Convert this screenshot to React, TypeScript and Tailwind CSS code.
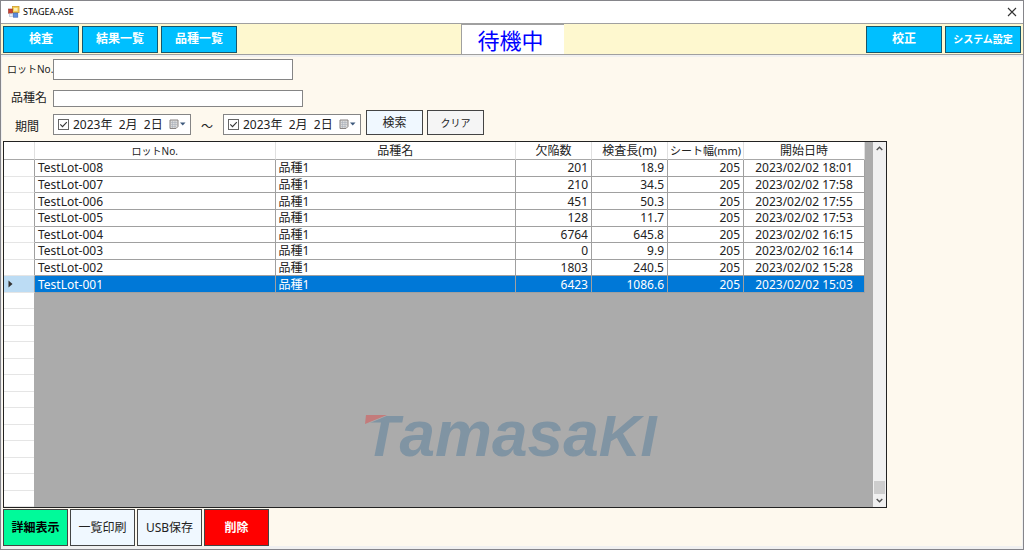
import React, { useState } from "react";

type Lot = {
  lot: string;
  kind: string;
  defects: string;
  length: string;
  width: string;
  start: string;
};

const lots: Lot[] = [
  { lot: "TestLot-008", kind: "品種1", defects: "201", length: "18.9", width: "205", start: "2023/02/02 18:01" },
  { lot: "TestLot-007", kind: "品種1", defects: "210", length: "34.5", width: "205", start: "2023/02/02 17:58" },
  { lot: "TestLot-006", kind: "品種1", defects: "451", length: "50.3", width: "205", start: "2023/02/02 17:55" },
  { lot: "TestLot-005", kind: "品種1", defects: "128", length: "11.7", width: "205", start: "2023/02/02 17:53" },
  { lot: "TestLot-004", kind: "品種1", defects: "6764", length: "645.8", width: "205", start: "2023/02/02 16:15" },
  { lot: "TestLot-003", kind: "品種1", defects: "0", length: "9.9", width: "205", start: "2023/02/02 16:14" },
  { lot: "TestLot-002", kind: "品種1", defects: "1803", length: "240.5", width: "205", start: "2023/02/02 15:28" },
  { lot: "TestLot-001", kind: "品種1", defects: "6423", length: "1086.6", width: "205", start: "2023/02/02 15:03" },
];

function AppIcon() {
  return (
    <svg width="12" height="12" viewBox="0 0 12 12" aria-hidden="true">
      <rect x="4.4" y="0.4" width="6.6" height="6.2" fill="#f5cf57" stroke="#cf9d2e" strokeWidth="0.8" />
      <rect x="6" y="2" width="3.4" height="2.8" fill="#fdf0b8" />
      <rect x="0.5" y="3" width="4" height="4.2" fill="#c8402f" stroke="#96352b" strokeWidth="0.6" />
      <rect x="1.6" y="7.8" width="3.4" height="2.8" fill="#e9eef8" stroke="#9aa9c8" strokeWidth="0.5" />
      <rect x="5.4" y="7" width="4.4" height="4.2" fill="#5b8de0" stroke="#3a62ab" strokeWidth="0.6" />
    </svg>
  );
}

function NavButton({ children }: { children: React.ReactNode }) {
  return (
    <button
      type="button"
      className="h-[27px] w-[76px] whitespace-nowrap border border-[#17566b] bg-[#00bfff] text-center text-xs font-bold leading-4 text-white"
    >
      {children}
    </button>
  );
}

function DatePicker({ id, label, value }: { id: string; label: string; value: string }) {
  const [text, setText] = useState(value);
  const [on, setOn] = useState(true);
  return (
    <div className="flex h-[21px] w-[138px] items-center border border-[#858585] bg-white pl-1 pr-1">
      <span className="relative flex size-[11px]">
        <input
          type="checkbox"
          aria-label={label + "を使う"}
          checked={on}
          onChange={(e) => setOn(e.target.checked)}
          className="size-[11px] appearance-none border border-[#666] bg-white"
        />
        {on && (
          <svg className="pointer-events-none absolute inset-0" width="11" height="11" viewBox="0 0 11 11" aria-hidden="true">
            <path d="M2.3 5.4 4.5 7.6 8.8 3.2" fill="none" stroke="#333" strokeWidth="1.1" />
          </svg>
        )}
      </span>
      <input
        id={id}
        aria-label={label}
        type="text"
        value={text}
        onChange={(e) => setText(e.target.value)}
        className="ml-1 h-4 w-0 min-w-0 flex-1 bg-transparent text-xs leading-4 text-[#222] outline-none"
      />
      <button type="button" aria-label={label + "のカレンダー"} className="flex items-center">
        <svg width="17" height="11" viewBox="0 0 17 11" aria-hidden="true">
          <path d="M1 1H9V7.5L7 9.5H1Z" fill="#dcdcdc" stroke="#8a8583" strokeWidth="1" />
          <path d="M2 3.5H8M2 5.5H8M2 7.5H7M3.5 2V9M6 2V9" stroke="#aab0bb" strokeWidth="0.6" />
          <path d="M11 3.5H16.5L13.75 6.5Z" fill="#3f5a7d" />
        </svg>
      </button>
    </div>
  );
}

function Watermark() {
  return (
    <svg
      className="pointer-events-none absolute bottom-[26px] left-[350px]"
      width="330"
      height="100"
      viewBox="0 0 330 100"
      role="img"
      aria-label="Tamasaki"
    >
      <text x="10" y="75" fill="#8094a3" className="font-['Liberation_Sans',sans-serif] font-bold italic">
        <tspan fontSize="58">T</tspan>
        <tspan fontSize="64">amasa</tspan>
        <tspan fontSize="58">KI</tspan>
      </text>
      <path d="M11 33.5H36L11 44Z" fill="#ababab" />
      <path d="M12 34H33L11 43Z" fill="#c37b7b" />
    </svg>
  );
}

const head = "h-[18px] border-b border-r border-r-[#e0e0e0] border-b-[#a8a8a8] bg-white p-0 pt-px font-normal whitespace-nowrap";

export default function App() {
  const [selected, setSelected] = useState(7);
  const [lot, setLot] = useState("");
  const [kind, setKind] = useState("");

  return (
    <div className="flex min-h-screen flex-col border border-[#85858a] bg-[#fef9ee] font-['Noto_Sans','Noto_Sans_CJK_JP',sans-serif] text-xs leading-4 text-[#222]">
      <header className="flex h-[22px] items-center justify-between bg-white pl-[7px] pr-1.5">
        <div className="flex items-center gap-[3px]">
          <AppIcon />
          <h1 className="text-[9px] leading-4 text-black">STAGEA-ASE</h1>
        </div>
        <button type="button" aria-label="閉じる">
          <svg width="10" height="10" viewBox="0 0 10 10" aria-hidden="true">
            <path d="M1 1 9 9M9 1 1 9" stroke="#333" strokeWidth="1.1" />
          </svg>
        </button>
      </header>

      <nav className="grid h-8 grid-cols-[1fr_auto_1fr] items-stretch border-y border-[#a0a0a0] bg-[#fef8cf] px-[2px]">
        <div className="flex items-center gap-[3px]">
          <NavButton>検査</NavButton>
          <NavButton>結果一覧</NavButton>
          <NavButton>品種一覧</NavButton>
        </div>
        <div className="flex w-[103px] items-center justify-center border-l border-t border-[#a0a0a0] bg-white pr-1 text-[22px] leading-7 text-[#0000ff]">
          待機中
        </div>
        <div className="flex items-center justify-end gap-[3px]">
          <NavButton>校正</NavButton>
          <button
            type="button"
            className="h-[27px] w-[76px] whitespace-nowrap border border-[#17566b] bg-[#00bfff] text-center text-[10px] font-bold leading-4 text-white"
          >
            システム設定
          </button>
        </div>
      </nav>

      <main className="flex flex-1 flex-col border-x border-b-[3px] border-t-2 border-[#f0f0f0] pl-px">
        <form className="flex flex-col pl-1" onSubmit={(e) => e.preventDefault()}>
          <div className="flex h-6 items-center">
            <label htmlFor="lot" className="w-[46px] whitespace-nowrap text-[10px]">
              ロットNo.
            </label>
            <input
              id="lot"
              value={lot}
              onChange={(e) => setLot(e.target.value)}
              className="h-[21px] w-[240px] border border-[#858585] bg-white px-1 outline-none"
            />
          </div>
          <div className="flex h-[34px] items-center">
            <label htmlFor="kind" className="w-[46px] whitespace-nowrap pl-1">
              品種名
            </label>
            <input
              id="kind"
              value={kind}
              onChange={(e) => setKind(e.target.value)}
              className="h-[17px] w-[250px] border border-[#858585] bg-white px-1 outline-none"
            />
          </div>
          <div className="flex h-[26px] items-end pb-1.5">
            <label htmlFor="from" className="w-[46px] whitespace-nowrap pl-2">
              期間
            </label>
            <DatePicker id="from" label="開始日" value="2023年  2月  2日" />
            <span className="w-8 text-center">～</span>
            <DatePicker id="to" label="終了日" value="2023年  2月  2日" />
            <div className="ml-[5px] flex gap-1">
              <button type="submit" className="h-[25px] w-[57px] border border-[#444] bg-[#f0f8ff] text-center">
                検索
              </button>
              <button type="button" className="h-[25px] w-[57px] border border-[#444] bg-[#f5f5f5] text-center text-[10px]">
                クリア
              </button>
            </div>
          </div>
        </form>

        <section className="relative mr-[135px] flex flex-1 border border-[#222] bg-[#ababab]">
          <div className="flex flex-1 flex-col pr-2">
            <table className="h-[151px] w-full table-fixed border-separate border-spacing-0 leading-[14px]">
              <colgroup>
                <col className="w-[31px]" />
                <col />
                <col />
                <col className="w-[76px]" />
                <col className="w-[76px]" />
                <col className="w-[76px]" />
                <col className="w-[121px]" />
              </colgroup>
              <thead>
                <tr>
                  <th className={head} aria-label="行" />
                  <th className={head + " text-[10px]"}>ロットNo.</th>
                  <th className={head}>品種名</th>
                  <th className={head}>欠陥数</th>
                  <th className={head}>検査長(m)</th>
                  <th className={head + " text-[11px]"}>シート幅(mm)</th>
                  <th className={head}>開始日時</th>
                </tr>
              </thead>
              <tbody>
                {lots.map((r, i) => {
                  const on = i === selected;
                  const cell =
                    "border-b border-r border-[#a0a0a0] p-0 pt-px whitespace-nowrap " +
                    (on ? "bg-[#0078d7] text-white" : "bg-white");
                  return (
                    <tr key={r.lot} aria-selected={on} onClick={() => setSelected(i)}>
                      <td
                        className={
                          "border-b border-r border-b-[#e5e5e5] border-r-[#a0a0a0] p-0 pl-1 " +
                          (on ? "bg-[#bcdcf4]" : "bg-white")
                        }
                      >
                        {on && (
                          <svg width="5" height="8" viewBox="0 0 5 8" aria-hidden="true">
                            <path d="M0.5 0.5 4.5 4 0.5 7.5Z" fill="#333" />
                          </svg>
                        )}
                      </td>
                      <td className={cell + " pl-[3px]"}>{r.lot}</td>
                      <td className={cell + " pl-[3px]"}>{r.kind}</td>
                      <td className={cell + " pr-[3px] text-right"}>{r.defects}</td>
                      <td className={cell + " pr-[3px] text-right"}>{r.length}</td>
                      <td className={cell + " pr-[3px] text-right"}>{r.width}</td>
                      <td className={cell + " text-center"}>{r.start}</td>
                    </tr>
                  );
                })}
              </tbody>
            </table>
            <div className="flex w-[30px] flex-1 flex-col bg-white">
              {Array.from({ length: 13 }, (_, i) => (
                <div key={i} className="flex-1 border-b border-[#e5e5e5]" />
              ))}
            </div>
          </div>
          <div className="flex w-[13px] flex-col items-center bg-[#f0f0f0]">
            <button type="button" aria-label="上へ" className="flex h-[13px] items-center">
              <svg width="7" height="5" viewBox="0 0 7 5" aria-hidden="true">
                <path d="M0.7 4 3.5 1.2 6.3 4" fill="none" stroke="#505050" strokeWidth="1.4" />
              </svg>
            </button>
            <div className="flex-1" />
            <div className="h-[13px] w-[11px] bg-[#cdcdcd]" />
            <button type="button" aria-label="下へ" className="flex h-[13px] items-center">
              <svg width="7" height="5" viewBox="0 0 7 5" aria-hidden="true">
                <path d="M0.7 1 3.5 3.8 6.3 1" fill="none" stroke="#505050" strokeWidth="1.4" />
              </svg>
            </button>
          </div>
          <Watermark />
        </section>

        <footer className="flex gap-[2px] pt-px">
          <button type="button" className="h-[37px] w-[65px] border border-[#444] bg-[#00fa9a] text-center font-bold text-black">
            詳細表示
          </button>
          <button type="button" className="h-[37px] w-[65px] border border-[#444] bg-[#f0f8ff] text-center">
            一覧印刷
          </button>
          <button type="button" className="h-[37px] w-[65px] border border-[#444] bg-[#f0f8ff] text-center">
            USB保存
          </button>
          <button type="button" className="h-[37px] w-[65px] border border-[#444] bg-[#ff0000] text-center font-bold text-white">
            削除
          </button>
        </footer>
      </main>
    </div>
  );
}
